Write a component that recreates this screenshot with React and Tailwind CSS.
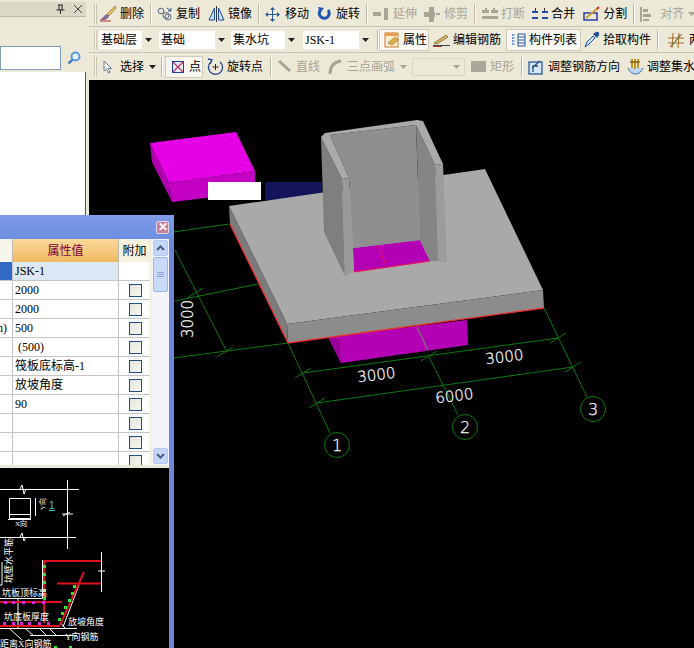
import React from "react";

const cjk = { fontFamily: '"Liberation Serif", "Noto Sans CJK SC", serif' };

// small toolbar icons
const Brush = () => (
  <svg width="18" height="18" viewBox="0 0 18 18">
    <path d="M16 1 L8 9 L10 11 L17 3 Z" fill="#e8c860" stroke="#6a5a20" strokeWidth="0.6" />
    <path d="M8 9 C5 10 4 13 1 15 C5 16 9 15 10 11 Z" fill="#8a6a9a" />
    <path d="M1 16 H12" stroke="#c03030" strokeWidth="1" />
  </svg>
);
const CopyIco = () => (
  <svg width="16" height="16" viewBox="0 0 16 16" fill="none" stroke="#5a6a80" strokeWidth="1">
    <circle cx="4" cy="5" r="2.8" />
    <circle cx="11" cy="11" r="3" />
    <circle cx="9" cy="9.5" r="3" />
    <path d="M10 2 L14 5 M14 2 V5 H11" stroke="#2a5a9a" />
  </svg>
);
const Mirror = () => (
  <svg width="17" height="16" viewBox="0 0 17 16">
    <path d="M6.5 2 L1 14 H6.5 Z" fill="#cfe0f5" stroke="#1f4f9f" />
    <path d="M10.5 2 L16 14 H10.5 Z" fill="#cfe0f5" stroke="#1f4f9f" />
    <path d="M8.5 0 V16" stroke="#333" />
  </svg>
);
const MoveIco = () => (
  <svg width="15" height="15" viewBox="0 0 15 15" fill="#2a5a9a">
    <path d="M7 3 H8 V7 H12 V8 H8 V12 H7 V8 H3 V7 H7 Z" />
    <path d="M7.5 0 L10 3 H5 Z M7.5 15 L10 12 H5 Z M0 7.5 L3 5 V10 Z M15 7.5 L12 5 V10 Z" />
  </svg>
);
const Rotate = () => (
  <svg width="14" height="14" viewBox="0 0 14 14" fill="none">
    <path d="M11 3 A5 5 0 1 1 4 2.5" stroke="#1f55b0" strokeWidth="3" />
    <path d="M1 0 L7 1 L3 6 Z" fill="#1f55b0" />
  </svg>
);
const Extend = ({ c = "#a8a496" }) => (
  <svg width="15" height="14" viewBox="0 0 15 14" fill={c}>
    <rect x="0" y="5" width="8" height="4" />
    <rect x="11" y="1" width="4" height="12" />
  </svg>
);
const Trim = ({ c = "#a8a496" }) => (
  <svg width="16" height="15" viewBox="0 0 16 15" fill={c}>
    <rect x="5" y="0" width="5" height="15" />
    <rect x="0" y="5" width="11" height="5" />
    <rect x="12" y="6" width="4" height="2" />
  </svg>
);
const BreakIco = () => (
  <svg width="16" height="14" viewBox="0 0 16 14" fill="#a8a496">
    <rect x="0" y="3" width="7" height="3" />
    <rect x="9" y="3" width="7" height="3" />
    <rect x="0" y="9" width="16" height="3" />
    <rect x="3" y="1" width="2" height="2" />
    <rect x="11" y="1" width="2" height="2" />
  </svg>
);
const MergeIco = () => (
  <svg width="16" height="14" viewBox="0 0 16 14" fill="#1f4f9f">
    <rect x="0" y="4" width="6" height="2" />
    <rect x="10" y="4" width="6" height="2" />
    <rect x="0" y="10" width="6" height="2" />
    <rect x="10" y="10" width="6" height="2" />
    <rect x="3" y="1" width="1" height="3" fill="#333" />
    <rect x="12" y="1" width="1" height="3" fill="#333" />
  </svg>
);
const SplitIco = () => (
  <svg width="17" height="16" viewBox="0 0 17 16" fill="none">
    <rect x="1" y="7" width="13" height="7" stroke="#1f2f9f" strokeWidth="1.4" />
    <path d="M3 12 L15 2" stroke="#c8a030" strokeWidth="2" />
    <path d="M14 3 L16 1" stroke="#c03030" strokeWidth="2" />
  </svg>
);
const AlignIco = () => (
  <svg width="11" height="15" viewBox="0 0 11 15" fill="#a8a496">
    <rect x="0" y="0" width="2" height="15" />
    <rect x="3" y="2" width="5" height="3" />
    <rect x="3" y="7" width="8" height="3" />
    <rect x="3" y="12" width="6" height="2" />
  </svg>
);
const PropIco = () => (
  <svg width="16" height="16" viewBox="0 0 16 16">
    <rect x="1" y="1" width="13" height="14" fill="#fbeed0" stroke="#d07a30" />
    <rect x="1" y="1" width="13" height="3" fill="#e8a050" />
    <path d="M4 11 L11 5 L14 8 L8 13 Z" fill="#e0b040" stroke="#7a5a20" strokeWidth="0.5" />
  </svg>
);
const EditIco = () => (
  <svg width="17" height="14" viewBox="0 0 17 14">
    <path d="M1 10 L13 2 L15 4 L4 11 Z" fill="#d8b060" stroke="#5a4a20" strokeWidth="0.6" />
    <path d="M0 12.5 H17" stroke="#444" />
    <path d="M0 13.5 H9" stroke="#c03030" />
  </svg>
);
const ListIco = () => (
  <svg width="15" height="14" viewBox="0 0 15 14" fill="none">
    <path d="M1 2 H4 M1 5 H4 M1 8 H4 M1 11 H4" stroke="#3a6ab0" strokeWidth="1.5" strokeDasharray="1.5 1" />
    <rect x="7" y="1" width="7" height="12" stroke="#2a5a9a" />
    <path d="M7 4 H14 M7 7 H14 M7 10 H14" stroke="#2a5a9a" />
  </svg>
);
const Dropper = () => (
  <svg width="16" height="17" viewBox="0 0 16 17">
    <path d="M1 16 L3 11 L9 5 L11 7 L5 13 Z" fill="#cfe6fa" stroke="#1f4f9f" />
    <path d="M9 3 L13 7 L15 4 C16 2 14 0 12 1 Z" fill="#1f4f9f" />
  </svg>
);
const GridIco = () => (
  <svg width="16" height="16" viewBox="0 0 16 16" fill="none" stroke="#a86a30">
    <path d="M0 6 H16 M0 11 H16 M5 1 L4 16 M11 1 L10 16" />
    <path d="M2 15 L14 2" stroke="#c03030" />
    <path d="M4 14 L12 3" stroke="#30a030" />
  </svg>
);
const Cursor = () => (
  <svg width="10" height="14" viewBox="0 0 10 14">
    <path d="M1 1 V11 L3.5 9 L5.5 13 L7 12.3 L5.2 8.5 H8.5 Z" fill="#fff" stroke="#6a7a9a" />
  </svg>
);
const PointIco = () => (
  <svg width="12" height="12" viewBox="0 0 12 12" fill="none">
    <rect x="0.5" y="0.5" width="11" height="11" stroke="#1f3f8f" fill="#e8eefa" />
    <path d="M1 1 L11 11 M11 1 L1 11" stroke="#c03060" strokeWidth="1.2" />
  </svg>
);
const RotPoint = () => (
  <svg width="17" height="17" viewBox="0 0 17 17" fill="none" stroke="#1f3f8f" strokeWidth="1.3">
    <path d="M4 4 A7 7 0 1 0 13 4" />
    <path d="M1 1 L5 2 L3 6" />
    <path d="M8.5 6 V12 M5.5 9 H11.5" stroke="#222" strokeWidth="1" />
  </svg>
);
const LineIco = () => (
  <svg width="15" height="13" viewBox="0 0 15 13"><path d="M1 1 L12 11" stroke="#a8a496" strokeWidth="3" /></svg>
);
const ArcIco = () => (
  <svg width="14" height="15" viewBox="0 0 14 15" fill="none"><path d="M2 15 C2 7 6 3 13 2" stroke="#a8a496" strokeWidth="3" /></svg>
);
const RectIco = () => <span className="w-[15px] h-[11px] bg-[#aca899] block" />;
const AdjustIco = () => (
  <svg width="16" height="16" viewBox="0 0 16 16" fill="none">
    <rect x="1" y="3" width="13" height="12" fill="#d8e6f5" stroke="#2a5a9a" strokeWidth="1.3" />
    <path d="M4 9 L12 2 M5 13 L5 7 H10" stroke="#1f4f7f" strokeWidth="1.3" />
  </svg>
);
const AdjustPit = () => (
  <svg width="17" height="18" viewBox="0 0 17 18" fill="none">
    <path d="M1 10 C4 18 13 18 16 10" fill="#bcd6f0" stroke="#3a6ab0" />
    <path d="M5 1 V10 M8 1 V11 M11 1 V10" stroke="#c89020" strokeWidth="2" />
    <path d="M3 4 H13" stroke="#8a6010" strokeWidth="1.4" />
  </svg>
);
const SearchIco = () => (
  <svg width="14" height="14" viewBox="0 0 14 14" fill="none">
    <circle cx="8.5" cy="5.5" r="4" stroke="#5a9ad8" strokeWidth="2" fill="#e4f0fb" />
    <path d="M5.5 8.5 L1.5 12.5" stroke="#3a7ac0" strokeWidth="2.4" />
  </svg>
);

const Grip = () => <span className="w-[3px] h-[20px] border-x border-x-[#c9c5b2] bg-[#f7f5ec] shrink-0" />;
const Sep = ({ cls = "" }) => <span className={"w-[2px] h-[20px] bg-[#bdb9a6] border-r border-r-white shrink-0 " + cls} />;
const Caret = ({ c = "#222" }) => (
  <svg width="7" height="4" viewBox="0 0 7 4" className="shrink-0"><path d="M0 0 H7 L3.5 4 Z" fill={c} /></svg>
);

const Tool = ({ icon, label, off, on, cls = "" }) => (
  <span
    style={cjk}
    className={
      "flex items-center gap-[3px] text-[12px] leading-none whitespace-nowrap shrink-0 " +
      (off ? "text-[#a8a496] " : "text-black ") +
      (on ? "bg-[#f7f6f0] border border-[#cfcbb8] h-[22px] " : "") +
      cls
    }
  >
    {icon}
    {label}
  </span>
);

const Combo = ({ text, cls }) => (
  <span className={"h-[18px] bg-white flex items-center justify-between pl-[2px] text-[12px] shrink-0 " + cls} style={cjk}>
    {text}
    <span className="w-[13px] h-[18px] bg-[#ece9d8] flex items-center justify-center"><Caret /></span>
  </span>
);

const rows = [
  ["", "JSK-1", false],
  ["", "2000", true],
  ["", "2000", true],
  ["m)", "500", true],
  ["", " (500)", true],
  ["", "筏板底标高-1", true],
  ["", "放坡角度", true],
  ["", "90", true],
  ["", "", true],
  ["", "", true],
  ["", "", true],
];

const PropWindow = () => (
  <div className="absolute left-0 top-[215px] w-[174px] h-[433px] flex flex-col bg-[#6f86d6] pr-[5px]" style={cjk}>
    <div className="h-[24px] shrink-0 -mr-[5px] bg-gradient-to-b from-[#7f9bea] to-[#6d8ee0] flex items-center justify-end pr-[5px]">
      <span className="w-[13px] h-[13px] rounded-[2px] bg-[#c27f9e] border border-[#e4d8e8] text-white text-[12px] leading-none font-bold flex items-center justify-center" style={{ fontFamily: '"Liberation Sans", sans-serif' }}>
        ✕
      </span>
    </div>
    <div className="h-[229px] shrink-0 bg-[#ece9d8] flex pb-[3px] overflow-hidden">
      <div className="w-[150px] h-[226px] bg-white overflow-hidden shrink-0">
        <div className="grid grid-cols-[13px_106px_31px] h-[23px] text-[12px] leading-none">
          <span className="bg-[#f7f5ea] border-r border-r-[#bdbab0]" />
          <span className="bg-gradient-to-b from-[#fbd99a] to-[#f0b95f] text-[#7a0040] flex items-center justify-center border-r border-r-[#bdbab0]">属性值</span>
          <span className="bg-[#f5f2e2] flex items-center justify-center">附加</span>
        </div>
        {rows.map((r, i) => (
          <div key={i} className="grid grid-cols-[13px_106px_31px] h-[19px] border-b border-b-[#c4c4c4] text-[12px] leading-none">
            <span className={"border-r border-r-[#c4c4c4] flex items-center justify-end pr-[5px] overflow-hidden whitespace-nowrap " + (i === 0 ? "bg-[#316ac5]" : "bg-white")}>{r[0]}</span>
            <span className={"border-r border-r-[#c4c4c4] flex items-center pl-[2px] whitespace-pre " + (i === 0 ? "bg-[#dde8f6]" : "bg-white")}>{r[1]}</span>
            <span className="flex items-center justify-center pl-[1px]">
              {r[2] && <span className="w-[13px] h-[13px] border border-[#1c5180] bg-gradient-to-br from-[#e4e3dc] to-[#f8f8f4] block" />}
            </span>
          </div>
        ))}
      </div>
      <div className="w-[18px] h-[226px] bg-[#f4f5fa] flex flex-col items-center pt-[1px] gap-[1px] shrink-0 ml-[1px]">
        <span className="w-[15px] h-[16px] rounded-[2px] border border-[#b5c8f0] bg-[#c6d6f7] flex items-center justify-center">
          <svg width="9" height="6" viewBox="0 0 9 6" fill="none"><path d="M1 5 L4.5 1.5 L8 5" stroke="#3f5f90" strokeWidth="2" /></svg>
        </span>
        <span className="w-[15px] h-[35px] rounded-[2px] border border-[#9db5ea] bg-[#c9d9f8] flex flex-col items-center justify-center gap-[1px]">
          <span className="w-[7px] h-px bg-[#8fa8dc]" />
          <span className="w-[7px] h-px bg-[#8fa8dc]" />
          <span className="w-[7px] h-px bg-[#8fa8dc]" />
        </span>
        <span className="flex-1" />
        <span className="w-[15px] h-[16px] rounded-[2px] border border-[#b5c8f0] bg-[#c6d6f7] flex items-center justify-center mb-[1px]">
          <svg width="9" height="6" viewBox="0 0 9 6" fill="none"><path d="M1 1 L4.5 4.5 L8 1" stroke="#3f5f90" strokeWidth="2" /></svg>
        </span>
      </div>
    </div>
    <div className="flex-1 bg-black overflow-hidden">
      <Preview />
    </div>
  </div>
);

// rebar diagram below the property table, coordinates follow the page (y starts at 468)
const Preview = () => (
  <svg width="169" height="180" viewBox="0 468 169 180" className="block">
    <g stroke="#fff" strokeWidth="1" fill="none">
      <path d="M0 489.5 H79 M0 537.5 H76 M67.5 480 V549" />
      <path d="M20 489 L22 485 L24 494 L26 489 M20 537 L22 533 L24 541 L26 537 M62 514 H73 M63 516 L70 512" />
      <path d="M9.5 498.5 H30.5 V518.5 H9.5 Z M9.5 514.5 H30.5 M35.5 498 V516 M8 519.5 H31" />
      <path d="M42.5 560 V598.5 M0 598.5 H42 M101.5 552 V592 M98 571 H105" />
      <path d="M63 627 L79 585 M0 628.5 H77 M30 635.5 H77 M18 598 V628" />
      <path d="M10 629 L22 640 M26 629 L34 636 M40 629 L46 635 M50 629 L56 635 M60 622 L65 628" />
      <path d="M2 562 V585 H0" />
    </g>
    <g stroke="#e0101c" strokeWidth="2" fill="none">
      <path d="M44 623 V561 H101 M57 583.5 H101 M60 625 L84 572 M0 626 H60 M0 602 H62" />
    </g>
    <g fill="#32e632">
      {[565, 573, 581, 589, 597].map((y) => <rect key={y} x="43" y={y} width="3" height="3" />)}
      {[[73, 585], [71, 592], [68, 599], [64, 606], [61, 612], [58, 618], [54, 646], [69, 646]].map(([x, y]) => (
        <rect key={x} x={x} y={y} width="3" height="3" />
      ))}
    </g>
    <g fill="#e020e0">
      {[4, 12, 22, 32, 42].map((x) => <rect key={x} x={x} y="601" width="3" height="3" />)}
      {[3, 12, 20, 28, 38, 47].map((x) => <rect key={x} x={x} y="622" width="3" height="3" />)}
    </g>
    <g fill="#fff" fontSize="9" style={cjk}>
      <text x="2" y="596">坑板顶标高</text>
      <text x="4" y="620">坑底板厚度</text>
      <text x="68" y="625">放坡角度</text>
      <text x="65" y="640">Y向钢筋</text>
      <text x="0" y="647">距离X向钢筋</text>
      <text x="15" y="526" fontSize="7">X向</text>
      <text transform="translate(12 583) rotate(-90)">坑壁水平筋</text>
      <text transform="translate(45 510) rotate(-90)" fontSize="7">Y向</text>
    </g>
    <text x="49" y="509" fill="#40d0d0" fontSize="10" textDecoration="underline" fontFamily="Liberation Sans, sans-serif">1</text>
  </svg>
);

const Tick = ({ x, y }) => <path d={`M${x - 8} ${y + 5} L${x + 8} ${y - 5}`} />;

const Bubble = ({ x, y, n }) => (
  <>
    <circle cx={x} cy={y} r="12.5" stroke="#0a7a0a" fill="none" />
    <text x={x} y={y + 6} fill="#fff" stroke="#fff" strokeWidth="0.25" fontSize="16" textAnchor="middle" fontFamily="DejaVu Sans, sans-serif" fontWeight="200">{n}</text>
  </>
);

const Dim = ({ x, y, r = -7, t }) => (
  <text transform={`translate(${x} ${y}) rotate(${r})`} fill="#fff" stroke="#fff" strokeWidth="0.25" fontSize="15" textAnchor="middle" fontFamily="DejaVu Sans, sans-serif" fontWeight="200">{t}</text>
);

const Scene = () => (
  <svg viewBox="89 80 605 568" className="block w-[605px] h-[568px]">
    {/* floating top piece */}
    <polygon points="150,143 236,132 255,171 169,183" fill="#e600e6" />
    <polygon points="150,143 169,183 172,202 152,162" fill="#b000b0" />
    <polygon points="169,183 255,171 255,192 172,202" fill="#c400c4" />
    <rect x="208" y="182" width="53" height="18" fill="#fff" />
    <rect x="265" y="182" width="57" height="18" fill="#14145a" />

    {/* axis grid */}
    <g stroke="#0a7a0a" fill="none">
      <path d="M173 232 L229 224 M175 301 L258 284 M173 358 L288 343" />
      <path d="M175 250 L227 352 M288 343 L330 433 M428 355 L458 415 M544 308 L587 397" />
      <path d="M303 373 L558 338 M317 403 L573 367" />
      <Tick x={195} y={293} />
      <Tick x={225} y={352} />
      <Tick x={303} y={373} />
      <Tick x={429} y={356} />
      <Tick x={558} y={338} />
      <Tick x={317} y={403} />
      <Tick x={573} y={367} />
    </g>

    {/* lower magenta block */}
    <polygon points="328,337 467,320 468,345 341,363" fill="#b400b4" />
    <polygon points="328,337 340,340 341,363" fill="#980098" />
    <path d="M417 327 L428 350" stroke="#7a6a7a" strokeWidth="1.5" />

    {/* slab */}
    <polygon points="229,206 485,169 543,290 287,324" fill="#a9a9a9" />
    <polygon points="287,324 543,290 544,308 288,343" fill="#8c8c8c" />
    <polygon points="229,206 287,324 288,343 230,224" fill="#7c7c7c" />
    <path d="M230 224 L288 343 L544 308" stroke="#f03030" strokeWidth="1.3" fill="none" />

    {/* pit floor */}
    <polygon points="353,248 420,240 430,261 354,272" fill="#b400b4" />
    <path d="M354 272 L430 261 M378 246 L386 265" stroke="#f01050" strokeWidth="1" />

    {/* pit walls */}
    <polygon points="330,135 416,125 420,240 353,248 349,178" fill="#8f8f8f" />
    <polygon points="416,125 435,165 439,261 430,261 420,240" fill="#858585" />
    <polygon points="435,165 443,164 447,262 438,262" fill="#9c9c9c" />
    <polygon points="321,137 342,179 345,276 324,232" fill="#7f7f7f" />
    <polygon points="342,179 349,178 354,272 345,276" fill="#9a9a9a" />
    <polygon points="321,137 325,133 417,120 423,121 443,164 435,165 416,125 330,135 349,178 342,179" fill="#aaaaaa" />

    <Dim x={377} y={380} t="3000" />
    <Dim x={505} y={362} t="3000" />
    <Dim x={455} y={401} t="6000" />
    <Dim x={193} y={319} r={-90} t="3000" />
    <Bubble x={337} y={445} n="1" />
    <Bubble x={465} y={427} n="2" />
    <Bubble x={593} y={409} n="3" />
  </svg>
);

export default function App() {
  return (
    <div className="relative w-[694px] h-[648px] overflow-hidden flex bg-[#ece9d8]">
      <div className="w-[89px] shrink-0 flex flex-col pr-[3px]">
        <div className="h-[15px] mt-[2px] bg-[#dcd8c6] border-b border-b-[#bdb9a6] flex items-center justify-end gap-[9px] pr-[4px] text-[#333]">
          <svg width="9" height="10" viewBox="0 0 9 10" fill="none" stroke="#222"><path d="M2 1 H7 M3 1 V6 M6 1 V6 M0.5 6 H8.5 M4.5 6 V10" /></svg>
          <svg width="8" height="8" viewBox="0 0 8 8" stroke="#444"><path d="M0 0 L8 8 M8 0 L0 8" /></svg>
        </div>
        <div className="h-[29px]" />
        <div className="h-[24px] flex items-center">
          <span className="w-[61px] h-[24px] bg-white border border-[#7f9db9]" />
          <span className="w-[25px] flex justify-center"><SearchIco /></span>
        </div>
        <div className="h-[2px]" />
        <div className="flex-1 bg-white border-r border-r-[#555]" />
      </div>

      <div className="flex-1 flex flex-col min-w-0">
        <div className="h-[25px] mt-[2px] flex items-center pl-[5px] border-b border-b-[#c9c5b2] overflow-hidden">
          <Grip />
          <Tool icon={<Brush />} label="删除" cls="ml-[2px]" />
          <Sep cls="ml-[6px]" />
          <Tool icon={<CopyIco />} label="复制" cls="ml-[5px]" />
          <Tool icon={<Mirror />} label="镜像" cls="ml-[8px]" />
          <Sep cls="ml-[6px]" />
          <Tool icon={<MoveIco />} label="移动" cls="ml-[5px] gap-[5px]" />
          <Tool icon={<Rotate />} label="旋转" cls="ml-[8px] gap-[5px]" />
          <Sep cls="ml-[6px]" />
          <Tool icon={<Extend />} label="延伸" off cls="ml-[5px] gap-[5px]" />
          <Tool icon={<Trim />} label="修剪" off cls="ml-[7px] gap-[4px]" />
          <Sep cls="ml-[6px]" />
          <Tool icon={<BreakIco />} label="打断" off cls="ml-[6px]" />
          <Tool icon={<MergeIco />} label="合并" cls="ml-[7px]" />
          <Tool icon={<SplitIco />} label="分割" cls="ml-[8px]" />
          <Sep cls="ml-[6px]" />
          <Tool icon={<AlignIco />} label="对齐" off cls="ml-[5px] gap-[9px]" />
          <span className="ml-[4px]"><Caret c="#a8a496" /></span>
        </div>
        <div className="h-[26px] flex items-center pl-[5px] border-b border-b-[#c9c5b2] overflow-hidden">
          <Grip />
          <Combo text="基础层" cls="w-[56px] ml-[2px]" />
          <Combo text="基础" cls="w-[69px] ml-[4px]" />
          <Combo text="集水坑" cls="w-[67px] ml-[3px]" />
          <Combo text="JSK-1" cls="w-[69px] ml-[5px]" />
          <Sep cls="ml-[5px]" />
          <Tool icon={<PropIco />} label="属性" on cls="w-[50px] pl-[4px]" />
          <Tool icon={<EditIco />} label="编辑钢筋" cls="ml-[4px]" />
          <Tool icon={<ListIco />} label="构件列表" on cls="w-[75px] pl-[4px] ml-[5px]" />
          <Tool icon={<Dropper />} label="拾取构件" cls="ml-[3px]" />
          <Sep cls="ml-[6px]" />
          <Tool icon={<GridIco />} label="两" cls="ml-[9px] gap-[5px]" />
        </div>
        <div className="h-[27px] flex items-center pl-[5px] overflow-hidden">
          <Grip />
          <Tool icon={<Cursor />} label="选择" cls="ml-[6px] gap-[7px]" />
          <span className="ml-[5px]"><Caret /></span>
          <Sep cls="ml-[5px]" />
          <Tool icon={<PointIco />} label="点" on cls="w-[38px] pl-[6px] gap-[5px] ml-[2px]" />
          <Tool icon={<RotPoint />} label="旋转点" cls="ml-[4px]" />
          <Sep cls="ml-[7px]" />
          <Tool icon={<LineIco />} label="直线" off cls="ml-[6px] gap-[3px]" />
          <Tool icon={<ArcIco />} label="三点画弧" off cls="ml-[8px] gap-[5px]" />
          <span className="ml-[5px]"><Caret c="#a8a496" /></span>
          <span className="w-[53px] h-[18px] border border-[#dcd8c6] ml-[5px] flex items-center justify-end pr-[4px] shrink-0"><Caret c="#a8a496" /></span>
          <Tool icon={<RectIco />} label="矩形" off cls="ml-[6px] gap-[4px]" />
          <Sep cls="ml-[7px]" />
          <Tool icon={<AdjustIco />} label="调整钢筋方向" cls="ml-[5px] gap-[4px]" />
          <Tool icon={<AdjustPit />} label="调整集水" cls="ml-[7px] gap-[3px]" />
        </div>
        <div className="flex-1 bg-black overflow-hidden">
          <Scene />
        </div>
      </div>

      <PropWindow />
    </div>
  );
}
